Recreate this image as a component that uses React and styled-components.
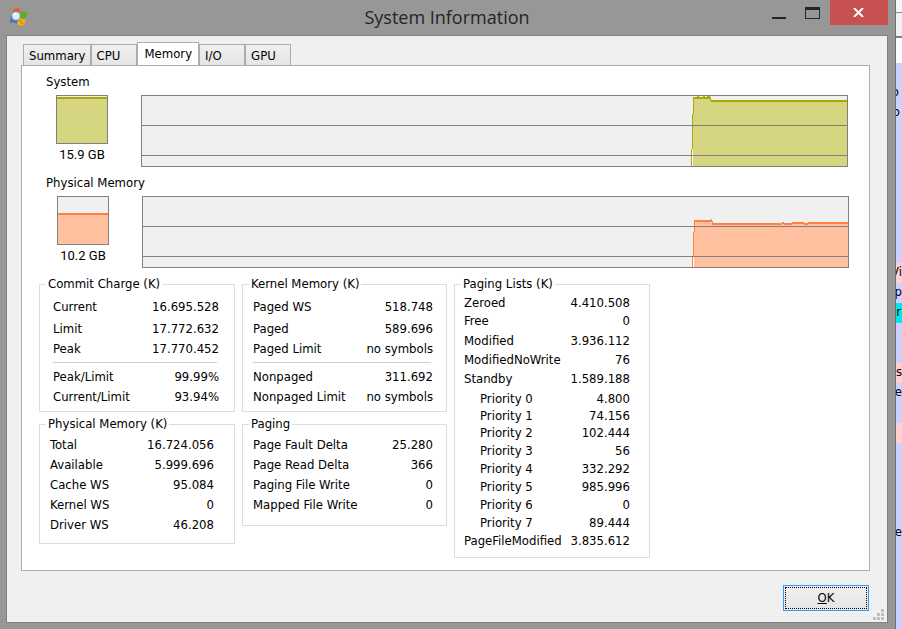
import React from 'react';
import styled, { createGlobalStyle } from 'styled-components';

const GlobalStyle = createGlobalStyle`
* {
  box-sizing: border-box;
}
body {
  margin: 0;
  font: 13px/16px "DejaVu Sans Condensed", "DejaVu Sans", sans-serif;
  color: #000;
}
button {
  font: inherit;
  color: inherit;
  border: 0;
  padding: 0;
}
`;

const Screen = styled.div`
display: flex;
min-height: 100vh;
`;

const Window = styled.main`
flex: 1;
min-width: 0;
display: flex;
flex-direction: column;
padding: 0 7px 6px 6px;
border-right: 1px solid #717171;
background-color: #979797;
`;

const TitleBar = styled.header`
display: grid;
grid-template-columns: 1fr auto 1fr;
height: 35px;
`;

const AppIcon = styled.svg`
width: 20px;
height: 20px;
margin: 7px 0 0 3px;
`;

const Title = styled.h1`
margin: 0;
font: 400 18px/35px "Open Sans", sans-serif;
color: #252525;
white-space: nowrap;
`;

const WindowButtons = styled.div`
display: flex;
justify-content: flex-end;
`;

const WindowButton = styled.button`
display: flex;
justify-content: center;
align-items: center;
width: ${p => p.$close ? '58px' : '34px'};
height: 25px;
background-color: ${p => p.$close ? '#c75050' : 'transparent'};
`;

const Client = styled.div`
flex: 1;
display: flex;
flex-direction: column;
padding: 6px 17px 0 14px;
border: 1px solid #808080;
background-color: #f0f0f0;
`;

const TabList = styled.div`
display: flex;
align-items: flex-end;
padding-left: 2px;
margin-bottom: -1px;
`;

const Tab = styled.button`
min-width: 46px;
height: ${p => p.$active ? '24px' : '22px'};
padding: ${p => p.$active ? '0 6px 1px 7px' : '1px 4px 0 5px'};
text-align: left;
border: 1px solid #acacac;
border-bottom-color: ${p => p.$active ? '#fff' : '#acacac'};
background: ${p => p.$active ? '#fff' : 'linear-gradient(#f0f0f0, #e5e5e5)'};
`;

const Panel = styled.section`
flex: 1;
padding: 8px 0 12px;
border: 1px solid #acacac;
background-color: #fff;
`;

const UsageLabel = styled.h2`
margin: 0 0 5px 24px;
font-size: inherit;
font-weight: 400;
`;

const UsageRow = styled.div`
display: flex;
gap: 33px;
padding: 0 ${p => 55 - p.$indent}px 0 ${p => p.$indent}px;
margin-bottom: 8px;
`;

const Meter = styled.div`
display: flex;
flex-direction: column;
justify-content: flex-end;
width: 52px;
height: 49px;
border: 1px solid #808080;
background-color: #f0f0f0;
`;

const MeterLevel = styled.div`
border-top: 2px solid ${p => p.$line};
background-color: ${p => p.$fill};
`;

const MeterCaption = styled.div`
margin-top: 3px;
text-align: center;
font-family: Roboto, sans-serif;
`;

const GraphBox = styled.svg`
flex: 1;
min-width: 0;
height: 72px;
border: 1px solid #808080;
background-color: #f0f0f0;
`;

const Groups = styled.div`
display: grid;
grid-template-columns: 196px 205px 196px;
column-gap: 7px;
padding-left: 17px;
`;

const GroupColumn = styled.div`
display: flex;
flex-direction: column;
gap: 4px;
`;

const Group = styled.fieldset`
min-width: 0;
margin: 0;
padding: ${p => p.$pad};
border: 1px solid #dcdcdc;
`;

const Legend = styled.legend`
margin-left: ${p => p.$left}px;
padding: 0 2px;
`;

const Table = styled.table`
width: 100%;
border-collapse: collapse;

th, td {
  padding: 0;
  white-space: nowrap;
}
th {
  text-align: left;
  font-weight: 400;
}
td {
  text-align: right;
}
`;

const Row = styled.tr`
height: ${p => p.$height}px;

th {
  padding-left: ${p => p.$nested ? '16px' : 0};
}
`;

const Separator = styled.hr`
margin: 4px 2px 4px 0;
border: 0;
border-top: 1px solid #d0d0d0;
`;

const Footer = styled.footer`
display: flex;
justify-content: flex-end;
align-items: flex-end;
gap: 4px;
padding: 14px 0 2px;
margin-right: -14px;
`;

const OkButton = styled.button`
width: 86px;
height: 26px;
margin-bottom: 9px;
border: 1px solid #3399ff;
outline: 1px dotted #000;
outline-offset: -3px;
background: linear-gradient(#f0f0f0, #e5e5e5);
`;

const Behind = styled.aside`
width: 6px;
overflow: hidden;
background-color: #d0d0ff;
`;

const BehindToolbar = styled.div`
height: 38px;
border-bottom: 2px solid #808080;
background: linear-gradient(#f7f7f7 12px, #8c8c8c 12px, #8c8c8c 13px, #f0f0f0 13px);
`;

const BehindHeader = styled.div`
height: 25px;
background-color: #fff;
`;

const BehindRow = styled.div`
display: flex;
justify-content: flex-end;
height: 20px;
padding-right: ${p => p.$gap || 0}px;
line-height: 18px;
background-color: ${p => p.$color || 'transparent'};
`;

const tabs = ['Summary', 'CPU', 'Memory', 'I/O', 'GPU'];

// blocks are [x, y, width, height] pieces of the trace
const systemGraph = {
    line: '#aaaa00',
    fill: '#d6d680',
    area: '551,2 568,2 569,5 705,5 705,70 551,70',
    trace: [
        [549, 53, 1, 17], [550, 18, 1, 35], [551, 1, 1, 17],
        [551, 1, 17, 2], [555, 0, 2, 1], [561, 0, 2, 1], [565, 0, 3, 1],
        [568, 1, 1, 4], [569, 4, 136, 2],
    ],
};

const physicalGraph = {
    line: '#ff8040',
    fill: '#ffc0a0',
    area: '551,24 568,24 569,27 705,26 705,70 551,70',
    trace: [
        [549, 60, 1, 10], [550, 35, 1, 25], [551, 23, 1, 12],
        [551, 23, 17, 2], [568, 22, 1, 3], [569, 24, 1, 3],
        [569, 26, 70, 2], [639, 25, 2, 2], [641, 26, 8, 2],
        [649, 25, 12, 2], [661, 26, 4, 2], [665, 25, 40, 2],
    ],
};

const commitCharge = [
    { label: 'Current', value: '16.695.528', height: 22 },
    { label: 'Limit', value: '17.772.632', height: 22 },
    { label: 'Peak', value: '17.770.452', height: 18 },
    { separator: true },
    { label: 'Peak/Limit', value: '99.99%' },
    { label: 'Current/Limit', value: '93.94%' },
];

const physicalMemory = [
    { label: 'Total', value: '16.724.056' },
    { label: 'Available', value: '5.999.696' },
    { label: 'Cache WS', value: '95.084' },
    { label: 'Kernel WS', value: '0' },
    { label: 'Driver WS', value: '46.208' },
];

const kernelMemory = [
    { label: 'Paged WS', value: '518.748', height: 22 },
    { label: 'Paged', value: '589.696', height: 22 },
    { label: 'Paged Limit', value: 'no symbols', height: 18 },
    { separator: true },
    { label: 'Nonpaged', value: '311.692' },
    { label: 'Nonpaged Limit', value: 'no symbols' },
];

const paging = [
    { label: 'Page Fault Delta', value: '25.280' },
    { label: 'Page Read Delta', value: '366' },
    { label: 'Paging File Write', value: '0' },
    { label: 'Mapped File Write', value: '0' },
];

const pagingLists = [
    { label: 'Zeroed', value: '4.410.508', height: 18 },
    { label: 'Free', value: '0', height: 18 },
    { label: 'Modified', value: '3.936.112', height: 22 },
    { label: 'ModifiedNoWrite', value: '76', height: 16 },
    { label: 'Standby', value: '1.589.188', height: 22 },
    { label: 'Priority 0', value: '4.800', height: 18, nested: true },
    { label: 'Priority 1', value: '74.156', height: 16, nested: true },
    { label: 'Priority 2', value: '102.444', height: 18, nested: true },
    { label: 'Priority 3', value: '56', height: 18, nested: true },
    { label: 'Priority 4', value: '332.292', height: 18, nested: true },
    { label: 'Priority 5', value: '985.996', height: 18, nested: true },
    { label: 'Priority 6', value: '0', height: 18, nested: true },
    { label: 'Priority 7', value: '89.444', height: 18, nested: true },
    { label: 'PageFileModified', value: '3.835.612', height: 18 },
];

const behindRows = [
    {}, { text: 'o', gap: 3 }, { text: 'o', gap: 2 }, {}, {}, {}, {}, {}, {}, {},
    { text: 'Vi', color: '#ffd0d0' }, { text: 'p' }, { text: 'r', color: '#00e8e8', gap: 1 },
    {}, {}, { text: 's', color: '#ffd0d0' }, { text: 'de' }, {},
    { color: '#ffd0d0' }, {}, {}, {}, {}, { text: 'e' },
];

function Usage({ label, caption, percent, indent, graph }) {
    return (
        <>
            <UsageLabel>{label}</UsageLabel>
            <UsageRow $indent={indent}>
                <div>
                    <Meter>
                        <MeterLevel $line={graph.line} $fill={graph.fill} style={{ height: `${percent}%` }} />
                    </Meter>
                    <MeterCaption>{caption}</MeterCaption>
                </div>
                <GraphBox viewBox="0 0 705 70" preserveAspectRatio="none" shapeRendering="crispEdges" role="img" aria-label={label}>
                    <rect x="550" y="53" width="1" height="17" fill="#fff" />
                    <polygon points={graph.area} fill={graph.fill} />
                    {graph.trace.map(([x, y, w, h], i) => (
                        <rect key={i} x={x} y={y} width={w} height={h} fill={graph.line} />
                    ))}
                    <path d="M0 29h705v1H0zM0 59h705v1H0z" fill="#808080" />
                </GraphBox>
            </UsageRow>
        </>
    );
}

function StatGroup({ title, rows, pad, legendLeft }) {
    return (
        <Group $pad={pad}>
            <Legend $left={legendLeft}>{title}</Legend>
            <Table>
                <tbody>
                    {rows.map((row, i) => row.separator ? (
                        <tr key={i}><td colSpan="2"><Separator /></td></tr>
                    ) : (
                        <Row key={i} $height={row.height || 20} $nested={row.nested}>
                            <th scope="row">{row.label}</th>
                            <td>{row.value}</td>
                        </Row>
                    ))}
                </tbody>
            </Table>
        </Group>
    );
}

function ResizeGrip() {
    return (
        <svg width="11" height="11" fill="#bfbfbf" shapeRendering="crispEdges" aria-hidden="true">
            <path d="M8 0h3v3H8zM4 4h3v3H4zM8 4h3v3H8zM0 8h3v3H0zM4 8h3v3H4zM8 8h3v3H8z" />
        </svg>
    );
}

export default function App() {
    return (
        <Screen>
            <GlobalStyle />
            <Window>
                <TitleBar>
                    <AppIcon viewBox="0 0 20 20" aria-hidden="true">
                        <path d="M4 3Q7 0 11 2L10 9Q6 8 3 9Z" fill="#e0602c" />
                        <path d="M12 4Q15 6 19 4L17 11Q14 13 10 10Z" fill="#6aa82c" />
                        <path d="M2 9Q6 8 9 10L8 17Q4 14 1 16Z" fill="#4a72c4" />
                        <path d="M10 11Q13 13 17 12L15 18Q12 20 8 17Z" fill="#f2b60c" />
                        <path d="M9 12l5 5" stroke="#d89010" strokeWidth="2" />
                        <circle cx="7" cy="9" r="4" fill="#d8f2ff" stroke="#9dbbd8" />
                        <path d="M4 9q1-3 3-3" stroke="#fff" fill="none" />
                    </AppIcon>
                    <Title>System Information</Title>
                    <WindowButtons>
                        <WindowButton aria-label="Minimize">
                            <svg width="14" height="12" shapeRendering="crispEdges"><path d="M0 10h14v2H0z" fill="#252525" /></svg>
                        </WindowButton>
                        <WindowButton aria-label="Maximize">
                            <svg width="16" height="12" shapeRendering="crispEdges"><path d="M0 0h15v12H0zM1 3v8h13V3z" fill="#252525" fillRule="evenodd" /></svg>
                        </WindowButton>
                        <WindowButton $close aria-label="Close">
                            <svg width="12" height="9"><path d="M1 0l9 9M10 0L1 9" stroke="#fff" strokeWidth="2" /></svg>
                        </WindowButton>
                    </WindowButtons>
                </TitleBar>
                <Client>
                    <TabList role="tablist">
                        {tabs.map(tab => (
                            <Tab key={tab} role="tab" $active={tab === 'Memory'} aria-selected={tab === 'Memory'}>{tab}</Tab>
                        ))}
                    </TabList>
                    <Panel role="tabpanel" aria-label="Memory">
                        <Usage label="System" caption="15.9 GB" percent={98} indent={34} graph={systemGraph} />
                        <Usage label="Physical Memory" caption="10.2 GB" percent={66} indent={35} graph={physicalGraph} />
                        <Groups>
                            <GroupColumn>
                                <StatGroup title="Commit Charge (K)" rows={commitCharge} pad="4px 15px 4px 13px" legendLeft={-7} />
                                <StatGroup title="Physical Memory (K)" rows={physicalMemory} pad="3px 20px 8px 10px" legendLeft={-4} />
                            </GroupColumn>
                            <GroupColumn>
                                <StatGroup title="Kernel Memory (K)" rows={kernelMemory} pad="4px 13px 4px 10px" legendLeft={-4} />
                                <StatGroup title="Paging" rows={paging} pad="3px 13px 10px 10px" legendLeft={-4} />
                            </GroupColumn>
                            <GroupColumn>
                                <StatGroup title="Paging Lists (K)" rows={pagingLists} pad="2px 19px 7px 9px" legendLeft={-3} />
                            </GroupColumn>
                        </Groups>
                    </Panel>
                    <Footer>
                        <OkButton><u>O</u>K</OkButton>
                        <ResizeGrip />
                    </Footer>
                </Client>
            </Window>
            <Behind aria-hidden="true">
                <BehindToolbar />
                <BehindHeader />
                {behindRows.map((row, i) => (
                    <BehindRow key={i} $color={row.color} $gap={row.gap}>{row.text}</BehindRow>
                ))}
            </Behind>
        </Screen>
    );
}
